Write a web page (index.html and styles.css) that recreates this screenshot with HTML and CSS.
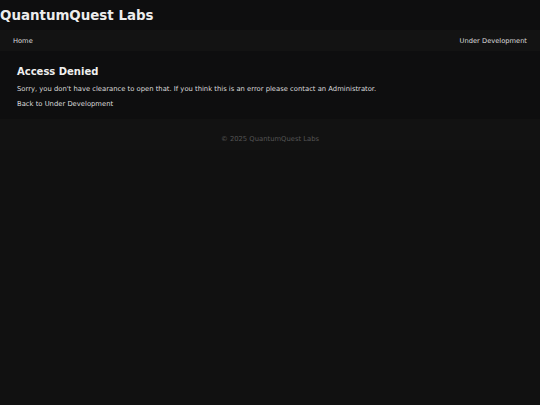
FILE: index.html
```html
<!DOCTYPE html>
<html lang="en">
<head>
  <meta charset="UTF-8">
  <meta name="viewport" content="width=device-width, initial-scale=1.0">
  <title>Access Denied - QuantumQuest Labs</title>
  <link rel="stylesheet" href="styles.css">
</head>
<body>
  <header class="site-header">
    <h1 class="site-title">QuantumQuest Labs</h1>
  </header>

  <!-- Navigation -->
  <nav class="nav-bar">
    <a href="#" class="nav-link">Home</a>
    <a href="#" class="nav-link">Under Development</a>
  </nav>

  <main class="content">
    <h2 class="page-title">Access Denied</h2>
    <p class="message">Sorry, you don't have clearance to open that. If you think this is an error please contact an Administrator.</p>
    <a href="#" class="back-link">Back to Under Development</a>
  </main>

  <footer class="site-footer">
    &copy; 2025 QuantumQuest Labs
  </footer>
</body>
</html>
```

FILE: styles.css
```css
body {
  margin: 0;
  font-family: "DejaVu Sans", Verdana, sans-serif;
  background-color: #111111;
  color: #e6e6e6;
}
.site-header {
  background-color: #0e0e0f;
  height: 30px;
  display: flex;
  align-items: center;
}
.site-title {
  margin: 0;
  font-size: 13.4px;
  font-weight: bold;
  color: #ededed;
}
.nav-bar {
  background-color: #131313;
  height: 21px;
  display: flex;
  justify-content: space-between;
  align-items: center;
  padding: 0 13px;
}
.nav-link {
  color: #dcdcdc;
  text-decoration: none;
  font-size: 6.7px;
}
.content {
  background-color: #0e0e0f;
  padding: 15px 17px 12px;
  height: 41px;
}
.page-title {
  margin: 0 0 7px;
  font-size: 10px;
  line-height: 12px;
  font-weight: bold;
  color: #f0f0f0;
}
.message {
  margin: 0 0 7px;
  font-size: 6.8px;
  line-height: 8px;
  color: #dcdcdc;
}
.back-link {
  display: block;
  font-size: 6.8px;
  line-height: 8px;
  color: #dcdcdc;
  text-decoration: none;
}
.site-footer {
  background-color: #121212;
  text-align: center;
  font-size: 6.8px;
  line-height: 8px;
  color: #555555;
  padding: 16px 0 7px;
}
```
